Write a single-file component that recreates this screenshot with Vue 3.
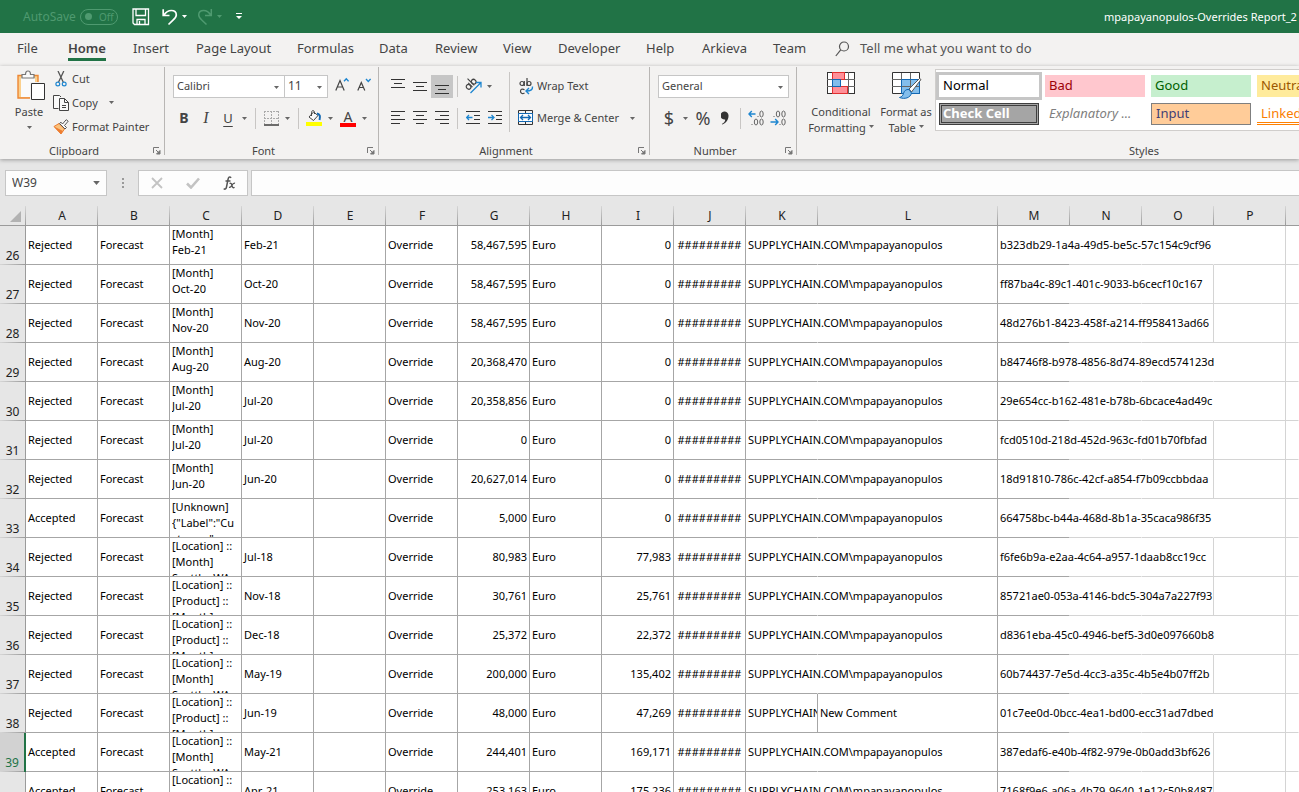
<script setup>
import { h, ref } from 'vue'

const Caret = () => h('svg', { class: 'caret', width: 5, height: 3, viewBox: '0 0 5 3', 'aria-hidden': 'true' }, [h('path', { d: 'M0 0h5L2.5 3z', fill: 'currentColor' })])
const Launcher = () => h('svg', { width: 8, height: 8, viewBox: '0 0 8 8', fill: 'none', stroke: '#777', 'aria-hidden': 'true' }, [h('path', { d: 'M.5 6V.5H6M3 3l3 3' }), h('path', { d: 'M3.5 7H7V3.5z', fill: '#777' })])

const tabs = ['File', 'Home', 'Insert', 'Page Layout', 'Formulas', 'Data', 'Review', 'View', 'Developer', 'Help', 'Arkieva', 'Team']
const active = ref('Home')
const nameBox = ref('W39')
const formula = ref('')

const alignIcons = [
  { name: 'Top Align', d: 'M0 .5h14M3 4.5h8M0 8.5h14', h: 15, row: 1 },
  { name: 'Middle Align', d: 'M0 3.5h14M3 7.5h8M0 11.5h14', h: 15, row: 1 },
  { name: 'Bottom Align', d: 'M0 7.5h14M3 11.5h8M0 15.5h14', h: 16, row: 1, on: true },
  { name: 'Align Left', d: 'M0 .5h14M0 4.5h9M0 8.5h14M0 12.5h9', h: 14, row: 2 },
  { name: 'Center', d: 'M0 .5h14M3 4.5h8M0 8.5h14M3 12.5h8', h: 14, row: 2 },
  { name: 'Align Right', d: 'M0 .5h14M5 4.5h9M0 8.5h14M5 12.5h9', h: 14, row: 2 },
]

const styles = [
  ['Normal', 'normal'], ['Bad', 'bad'], ['Good', 'good'], ['Neutral', 'neutral'],
  ['Check Cell', 'check'], ['Explanatory ...', 'expl'], ['Input', 'inputc'], ['Linked Cell', 'linked'],
]

const columns = 'ABCDEFGHIJKLMNOP'.split('')
const LM = ['[Location] ::', '[Month]', 'Seattle, WA']
const LP = ['[Location] ::', '[Product] ::', '[Month]']
const row = (n, status, scope, period, value, orig, id, extra = {}) => ({ n, status, scope, period, value, orig, id, ...extra })
const rows = [
  row(26, 'Rejected', ['[Month]', 'Feb-21'], 'Feb-21', '58,467,595', '0', 'b323db29-1a4a-49d5-be5c-57c154c9cf96', { wide: true }),
  row(27, 'Rejected', ['[Month]', 'Oct-20'], 'Oct-20', '58,467,595', '0', 'ff87ba4c-89c1-401c-9033-b6cecf10c167'),
  row(28, 'Rejected', ['[Month]', 'Nov-20'], 'Nov-20', '58,467,595', '0', '48d276b1-8423-458f-a214-ff958413ad66'),
  row(29, 'Rejected', ['[Month]', 'Aug-20'], 'Aug-20', '20,368,470', '0', 'b84746f8-b978-4856-8d74-89ecd574123d', { wide: true }),
  row(30, 'Rejected', ['[Month]', 'Jul-20'], 'Jul-20', '20,358,856', '0', '29e654cc-b162-481e-b78b-6bcace4ad49c', { wide: true }),
  row(31, 'Rejected', ['[Month]', 'Jul-20'], 'Jul-20', '0', '0', 'fcd0510d-218d-452d-963c-fd01b70fbfad'),
  row(32, 'Rejected', ['[Month]', 'Jun-20'], 'Jun-20', '20,627,014', '0', '18d91810-786c-42cf-a854-f7b09ccbbdaa'),
  row(33, 'Accepted', ['[Unknown]', '{"Label":"Cu', 'stomer"'], '', '5,000', '0', '664758bc-b44a-468d-8b1a-35caca986f35', { wide: true }),
  row(34, 'Rejected', LM, 'Jul-18', '80,983', '77,983', 'f6fe6b9a-e2aa-4c64-a957-1daab8cc19cc'),
  row(35, 'Rejected', LP, 'Nov-18', '30,761', '25,761', '85721ae0-053a-4146-bdc5-304a7a227f93'),
  row(36, 'Rejected', LP, 'Dec-18', '25,372', '22,372', 'd8361eba-45c0-4946-bef5-3d0e097660b8', { wide: true }),
  row(37, 'Rejected', LM, 'May-19', '200,000', '135,402', '60b74437-7e5d-4cc3-a35c-4b5e4b07ff2b'),
  row(38, 'Rejected', LP, 'Jun-19', '48,000', '47,269', '01c7ee0d-0bcc-4ea1-bd00-ecc31ad7dbed', { wide: true, comment: 'New Comment' }),
  row(39, 'Accepted', LM, 'May-21', '244,401', '169,171', '387edaf6-e40b-4f82-979e-0b0add3bf626', { selected: true }),
  row(40, 'Accepted', LP, 'Apr-21', '253,163', '175,236', '7168f9e6-a06a-4b79-9640-1e12c50b8487'),
]
</script>

<template>
  <div class="excel">
    <header class="titlebar">
      <label class="autosave">AutoSave
        <input type="checkbox" disabled>
        <span class="switch"><i></i>Off</span>
      </label>
      <div class="quick">
        <button aria-label="Save">
          <svg width="18" height="18" viewBox="0 0 18 18" fill="none" stroke="#fff" stroke-width="1.3"><path d="M1 1h15.5v15.5H2.5L1 15zM4 1v6.5h9.5V1M5 16.5v-5h8v5M7.5 16.5V13" /></svg>
        </button>
        <button class="undo" aria-label="Undo">
          <svg width="16" height="18" viewBox="0 0 16 18" fill="none" stroke="#fff" stroke-width="1.7"><path d="M1.2 1.2v6.3h6.3M1.8 7.2C4 4 6.500 2.500 9.300 2.500c3.200 0 5 2 5 4.500 0 2.200-1.500 3.600-3.300 5.200L6.500 16.500" /></svg>
          <Caret />
        </button>
        <button class="redo" aria-label="Redo" disabled>
          <svg width="16" height="18" viewBox="0 0 16 18" fill="none" stroke="currentColor" stroke-width="1.500"><path d="M14.300 1v6.500H8M13.800 7.200C11.800 4 9.500 2.500 6.700 2.500c-3.200 0-5 2-5 4.500 0 2.200 1.500 3.600 3.300 5.200l4.500 4.300" /></svg>
          <Caret />
        </button>
        <button class="custom" aria-label="Customize Quick Access Toolbar">
          <svg width="6" height="7" viewBox="0 0 6 7" fill="#fff"><path d="M0 0h6v1H0zM0 3h6L3 6z" /></svg>
        </button>
      </div>
      <div class="doc-title">mpapayanopulos-Overrides Report_2</div>
    </header>

    <nav class="tabs" aria-label="Ribbon tabs">
      <button v-for="t in tabs" :key="t" :class="{ on: t === active }" @click="active = t">{{ t }}</button>
      <svg class="search" width="15" height="16" viewBox="0 0 15 16" fill="none" stroke="#555" stroke-width="1.200"><circle cx="9" cy="5.500" r="4.500" /><path d="M5.700 8.800L.8 15" /></svg>
      <button class="tell">Tell me what you want to do</button>
    </nav>

    <section class="ribbon" aria-label="Home">
      <div class="group clipboard">
        <div class="body">
          <button class="paste">
            <svg width="30" height="31" viewBox="0 0 30 31" fill="none">
              <path d="M2 5.500h20V28H2z" fill="#fbd08d" stroke="#ed8733" stroke-width="1.400" />
              <path d="M5 8h14v19H5z" fill="#fafafa" />
              <path d="M6 8V4.500h3.500C9.500 2 10.500 1 12 1s2.500 1 2.500 3.500H18V8z" fill="#fafafa" stroke="#777" stroke-width="1.200" />
              <path d="M14 12h16v19H14z" fill="#f3f2f1" />
              <path d="M15.500 13.500h13v16h-13z" fill="#fff" stroke="#333" />
            </svg>
            <span>Paste</span><Caret />
          </button>
          <div class="cliplist">
            <button>
              <svg width="16" height="16" viewBox="0 0 16 16" fill="none"><path d="M5 0l5.300 11.300M10.800 0L5.500 11.300" stroke="#555" stroke-width="1.300" /><circle cx="4.800" cy="13" r="1.900" stroke="#1e86d0" stroke-width="1.200" /><circle cx="11.200" cy="13" r="1.900" stroke="#1e86d0" stroke-width="1.200" /></svg>
              Cut
            </button>
            <button>
              <svg width="16" height="16" viewBox="0 0 16 16" fill="none" stroke="#444"><path d="M5.500 13.500h-5V.5h6l1.500 1.500M6.500 3.500h5l4 4v8h-9z" fill="#fafafa" /><path d="M11.500 3.500v4h4M9 10.500h4M9 12.500h4" /></svg>
              Copy <Caret />
            </button>
            <button>
              <svg width="16" height="16" viewBox="0 0 16 16" fill="none"><path d="M6 4.500L1 7.500l7 7.500 3.500-5z" fill="#fbc27c" stroke="#ed7d31" /><path d="M1 7.500l7 7.500 2-3z" fill="#ed7d31" /><path d="M6.500 4.500l5.500 5.500 1.500-1.500-2-2 3.700-4.300-2-1.500L9.500 5 8 3.200z" fill="#fafafa" stroke="#555" /></svg>
              Format Painter
            </button>
          </div>
        </div>
        <div class="caption">Clipboard<button class="launch" aria-label="Clipboard settings"><Launcher /></button></div>
      </div>

      <div class="group font">
        <div class="body rowsbox">
          <div class="tools">
            <span class="pick fontname"><select aria-label="Font"><option>Calibri</option></select><Caret /></span>
            <span class="pick fontsize"><select aria-label="Font size"><option>11</option></select><Caret /></span>
            <button class="t grow" aria-label="Increase Font Size"><svg width="14" height="15" viewBox="0 0 14 15" fill="none"><path d="M.8 13.500L5 3.500l4.200 10M2.300 10h5.400" stroke="#444" stroke-width="1.200" /><path d="M9 4.300l2.300-2.500 2.300 2.500" stroke="#1e86d0" stroke-width="1.400" /></svg></button>
            <button class="t grow" aria-label="Decrease Font Size"><svg width="14" height="15" viewBox="0 0 14 15" fill="none"><path d="M.8 13.500L4.300 5.500l3.500 8M2 10.500h4.600" stroke="#444" stroke-width="1.200" /><path d="M9 2l2.300 2.500L13.600 2" stroke="#1e86d0" stroke-width="1.400" /></svg></button>
          </div>
          <div class="tools">
            <button class="t bold">B</button>
            <button class="t ital">I</button>
            <button class="t under">U</button>
            <button class="c" aria-label="Underline options"><Caret /></button>
            <i class="sep"></i>
            <button class="t" aria-label="Borders"><svg width="15" height="15" viewBox="0 0 15 15" fill="none" stroke="#aaa" stroke-dasharray="2 1"><path d="M0 .5h15M.5 0v13M14.500 0v13M7.500 0v13M0 7.500h15" /><path d="M0 14h15" stroke="#222" stroke-dasharray="none" stroke-width="1.300" /></svg></button>
            <button class="c" aria-label="Border options"><Caret /></button>
            <i class="sep"></i>
            <button class="t" aria-label="Fill Color"><svg width="16" height="16" viewBox="0 0 16 16" fill="none"><path d="M0 12h16v4H0z" fill="#ff0" /><path d="M7.500 2L3 7l4.500 3.500L12 5.500zM5.500 6V2.500C5.500 0 8.500 0 8.500 2.500V4" fill="#fafafa" stroke="#444" /><path d="M11 3.500c3 .5 3.500 3 2.500 6.500" stroke="#1268b3" stroke-width="2" /></svg></button>
            <button class="c" aria-label="Fill color options"><Caret /></button>
            <button class="t fontcolor" aria-label="Font Color"><span>A</span></button>
            <button class="c" aria-label="Font color options"><Caret /></button>
          </div>
        </div>
        <div class="caption">Font<button class="launch" aria-label="Font settings"><Launcher /></button></div>
      </div>

      <div class="group alignment">
        <div class="body">
          <div class="rowsbox">
            <div v-for="r in [1, 2]" :key="r" class="tools">
              <button v-for="a in alignIcons.filter(i => i.row === r)" :key="a.name" class="t" :class="{ pressed: a.on }" :aria-label="a.name">
                <svg width="14" :height="a.h" :viewBox="`0 0 14 ${a.h}`" stroke="#333" shape-rendering="crispEdges"><path :d="a.d" /></svg>
              </button>
              <i class="sep"></i>
              <template v-if="r === 1">
                <button class="t" aria-label="Orientation">
                  <svg width="18" height="18" viewBox="0 0 18 18" fill="none"><g transform="rotate(-45 6 7)" stroke="#444" stroke-width="1.200"><ellipse cx="3" cy="8" rx="2.200" ry="2.500" /><path d="M5.500 5v6M8 1.500V11" /><ellipse cx="10.200" cy="8" rx="2.200" ry="2.500" /></g><path d="M6.500 16L16.500 6M12 5.500h5v5" stroke="#1e86d0" stroke-width="1.300" /></svg>
                </button>
                <button class="c" aria-label="Orientation options"><Caret /></button>
              </template>
              <template v-else>
                <button class="t" aria-label="Decrease Indent"><svg width="15" height="14" viewBox="0 0 15 14" fill="none" stroke="#333"><path d="M0 .5h14M8 4.500h6M8 8.500h6M0 12.500h14" shape-rendering="crispEdges" /><path d="M6.500 6.500H.8M3 4L.6 6.500 3 9" stroke="#1e86d0" stroke-width="1.300" /></svg></button>
                <button class="t" aria-label="Increase Indent"><svg width="15" height="14" viewBox="0 0 15 14" fill="none" stroke="#333"><path d="M0 .5h14M8 4.500h6M8 8.500h6M0 12.500h14" shape-rendering="crispEdges" /><path d="M0 6.500h5.700M3.500 4L6 6.500 3.500 9" stroke="#1e86d0" stroke-width="1.300" /></svg></button>
              </template>
            </div>
          </div>
          <i class="sep tall"></i>
          <div class="rowsbox wraps">
            <button class="tools">
              <svg width="16" height="17" viewBox="0 0 16 17" fill="none" stroke="#444" stroke-width="1.200"><ellipse cx="4" cy="5.500" rx="2" ry="2" /><path d="M6.300 3v5M9 0v8" /><ellipse cx="11" cy="5.500" rx="2" ry="2" /><path d="M6.500 11.700c-2.500-1.500-4 0-4 1.600s1.500 3.100 4 1.600" /><path d="M14.500 8.500c.3 3-1.500 4.500-6 4.500M11 10l-3 3 3 3" stroke="#1e86d0" stroke-width="1.400" /></svg>
              Wrap Text
            </button>
            <button class="tools">
              <svg width="16" height="16" viewBox="0 0 16 16" fill="none"><path d="M.5.5h14v14H.5zM7.500 0v4M7.500 11v4" stroke="#333" /><path d="M.5 3.500h14v8H.5z" fill="#fff" stroke="#1268b3" /><path d="M2.500 7.500h10M5 5L2.500 7.500 5 10M10 5l2.500 2.500L10 10" stroke="#1268b3" stroke-width="1.300" /></svg>
              Merge &amp; Center <Caret />
            </button>
          </div>
        </div>
        <div class="caption">Alignment<button class="launch" aria-label="Alignment settings"><Launcher /></button></div>
      </div>

      <div class="group number">
        <div class="body rowsbox">
          <div class="tools"><span class="pick numfmt"><select aria-label="Number format"><option>General</option></select><Caret /></span></div>
          <div class="tools">
            <button class="t glyph">$</button>
            <button class="c" aria-label="Accounting options"><Caret /></button>
            <button class="t glyph">%</button>
            <button class="t" aria-label="Comma Style"><svg width="8" height="14" viewBox="0 0 8 14"><path d="M.8 13c2.500-1.200 3.400-2.800 3.400-4.500A4 4 0 1 1 7.500 4.300C7.700 8.500 5.500 12 1.500 13.500z" fill="#333" /></svg></button>
            <i class="sep"></i>
            <button class="t" aria-label="Increase Decimal"><svg width="17" height="16" viewBox="0 0 17 16" fill="none" stroke="#666"><ellipse cx="13.500" cy="4" rx="1.700" ry="3" /><ellipse cx="8" cy="12" rx="1.700" ry="3" /><ellipse cx="13.500" cy="12" rx="1.700" ry="3" /><path d="M9.500 6.500h1M3.500 14.500h1" /><path d="M7.500 4H1M3.800 1L1 4l2.800 3" stroke="#1e86d0" stroke-width="1.400" /></svg></button>
            <button class="t" aria-label="Decrease Decimal"><svg width="17" height="16" viewBox="0 0 17 16" fill="none" stroke="#666"><ellipse cx="8" cy="4" rx="1.700" ry="3" /><ellipse cx="13.500" cy="4" rx="1.700" ry="3" /><ellipse cx="13.500" cy="12" rx="1.700" ry="3" /><path d="M3.500 6.500h1M9.500 14.500h1" /><path d="M.5 12H8M5.200 9L8 12l-2.800 3" stroke="#1e86d0" stroke-width="1.400" /></svg></button>
          </div>
        </div>
        <div class="caption">Number<button class="launch" aria-label="Number settings"><Launcher /></button></div>
      </div>

      <div class="group styles">
        <div class="body">
          <button class="large">
            <svg width="30" height="30" viewBox="0 0 30 30" fill="none" shape-rendering="crispEdges"><path d="M1.500 2.500h27v21h-27z" fill="#fff" stroke="#333" /><path d="M1 9.500h28M1 16.500h28M22.500 2v22M6.500 2v22" stroke="#666" /><path d="M6.500 2.500h12v7h-12zM6.500 16.500h15v7h-15z" fill="#ff9098" stroke="#e03030" /><path d="M6.500 9.500h8v7h-8z" fill="#83beec" stroke="#1268b3" /></svg>
            <span>Conditional</span><span>Formatting <Caret /></span>
          </button>
          <button class="large fat">
            <svg width="32" height="30" viewBox="0 0 32 30" fill="none"><path d="M2.500 2.500h27v21h-27z" fill="#fff" /><path d="M11 9h18.500v14.500H11z" fill="#83beec" /><path d="M2.500 23.500v-21h27v21z" stroke="#333" /><path d="M2 9.500h27M2 16.500h27M11.500 3v20M20.500 3v20" stroke="#666" /><path d="M11.500 23.500v-14h18v14z" stroke="#1268b3" /><path d="M19 19L29.500 8.500l1.500 1L21.500 22z" fill="#fff" stroke="#555" /><path d="M19 19.500c-3-.5-5 1.500-5.500 4S11 27 9.500 27.500c5 2 11 .5 12-4.500z" fill="#83beec" stroke="#1268b3" /></svg>
            <span>Format as</span><span>Table <Caret /></span>
          </button>
          <div class="gallery">
            <button v-for="s in styles" :key="s[0]" :class="s[1]">{{ s[0] }}</button>
          </div>
        </div>
        <div class="caption">Styles</div>
      </div>
    </section>

    <section class="formulabar">
      <div class="namebox"><input v-model="nameBox" aria-label="Name Box"><Caret /></div>
      <svg class="grip" width="2" height="10" viewBox="0 0 2 10" fill="#999"><path d="M0 0h2v2H0zM0 4h2v2H0zM0 8h2v2H0z" /></svg>
      <div class="fx">
        <button aria-label="Cancel"><svg width="12" height="12" viewBox="0 0 12 12" stroke="#c3c3c3" stroke-width="1.800"><path d="M1 1l10 10M11 1L1 11" /></svg></button>
        <button aria-label="Enter"><svg width="14" height="12" viewBox="0 0 14 12" fill="none" stroke="#c3c3c3" stroke-width="2.600"><path d="M1 6.500l4 4L13 1.500" /></svg></button>
        <button class="fxi" aria-label="Insert Function"><svg width="13" height="14" viewBox="0 0 13 14" fill="none" stroke="#555"><path d="M8.200 1.800C6.500.3 5.500 1.200 5 3.500L3.500 11c-.4 2-1.300 2.700-2.800 1.700M2.500 5h5" stroke-width="1.500" /><path d="M6.500 7.500c1.500-.8 2 .2 2.500 2s1 3 2.500 1.700M12 7.300c-1.500-.5-2.500 1-3.200 2.200s-1.300 2.300-2.800 1.700" stroke-width="1.300" /></svg></button>
      </div>
      <input v-model="formula" class="formula" aria-label="Formula">
    </section>

    <main class="sheet">
      <table>
        <colgroup>
          <col class="w-head">
          <col v-for="c in columns" :key="c" :class="c === 'L' ? 'w-wide' : 'w-col'">
          <col>
        </colgroup>
        <thead>
          <tr>
            <th class="corner"><svg width="11" height="11" viewBox="0 0 11 11"><path d="M11 0v11H0z" fill="#b2b2b2" /></svg></th>
            <th v-for="c in columns" :key="c" scope="col">{{ c }}</th>
            <th class="last"></th>
          </tr>
        </thead>
        <tbody>
          <tr v-for="r in rows" :key="r.n" :class="{ selected: r.selected }">
            <th scope="row">{{ r.n }}</th>
            <td>{{ r.status }}</td>
            <td>Forecast</td>
            <td class="multi"><div><p v-for="(l, i) in r.scope" :key="i">{{ l }}</p></div></td>
            <td>{{ r.period }}</td>
            <td></td>
            <td>Override</td>
            <td class="num">{{ r.value }}</td>
            <td>Euro</td>
            <td class="num">{{ r.orig }}</td>
            <td class="hash">#########</td>
            <td :class="r.comment ? 'clip' : 'spill'">SUPPLYCHAIN.COM\mpapayanopulos</td>
            <td>{{ r.comment }}</td>
            <td class="spill">{{ r.id }}</td>
            <td class="light spill"></td>
            <td class="light" :class="{ spill: r.wide }"></td>
            <td class="light"></td>
            <td class="light spill"></td>
          </tr>
        </tbody>
      </table>
    </main>
  </div>
</template>

<style>
html, body { overflow: hidden; }
</style>

<style scoped>
* { box-sizing: border-box; }
.excel { height: 100vh; overflow: hidden; display: flex; flex-direction: column; background: #e6e6e6; color: #444; font: 12px/16px "Noto Sans", "Open Sans", sans-serif; }
button, input, select { font: inherit; color: inherit; background: none; border: 0; padding: 0; margin: 0; border-radius: 0; }
svg { display: block; flex: none; }
.caret { color: #666; }

.titlebar { flex: none; height: 33px; background: #217346; color: #fff; display: flex; align-items: center; overflow: hidden; }
.autosave { display: flex; align-items: center; gap: 4px; padding-left: 23px; width: 132px; color: #4f9a70; }
.autosave input { position: absolute; opacity: 0; }
.switch { width: 38px; height: 16px; border: 1px solid #4f9a70; border-radius: 8px; display: flex; align-items: center; gap: 7px; padding-left: 4px; font-size: 10px; }
.switch i { width: 7px; height: 7px; border-radius: 50%; background: #4f9a70; }
.quick { display: flex; align-items: center; flex: 1; }
.quick button { display: flex; align-items: center; gap: 4px; }
.quick .caret { color: #fff; }
.quick .undo { margin-left: 12px; }
.quick .redo { margin-left: 10px; color: #4f9a70; }
.quick .redo .caret { color: #4f9a70; }
.quick .custom { margin-left: 14px; }
.doc-title { flex: 0 0 195px; overflow: hidden; white-space: nowrap; font-size: 11px; }

.tabs { flex: none; height: 33px; background: #f3f2f1; display: grid; grid-template-columns: 51px 65px 63px 101px 82px 56px 68px 55px 88px 56px 71px 62px 25px auto; padding-left: 17px; font-size: 13px; }
.tabs button { justify-self: start; height: 28px; padding-top: 5px; border-bottom: 3px solid transparent; white-space: nowrap; }
.tabs .on { font-weight: 600; border-color: #217346; }
.tabs .search { margin-top: 8px; }
.tabs .tell { color: #555; }

.ribbon { flex: none; height: 93px; background: #f3f2f1; display: flex; overflow: hidden; box-shadow: 0 1px 4px #999; z-index: 1; font-size: 11px; }
.group { flex: none; display: flex; flex-direction: column; position: relative; }
.group::after { content: ""; position: absolute; right: 0; top: 1px; height: 88px; width: 1px; background: #b8b6b4; }
.body { flex: 1; display: flex; min-height: 0; }
.caption { height: 16px; text-align: center; position: relative; padding-right: 17px; }
.launch { position: absolute; right: 4px; top: 4px; }
.clipboard { width: 165px; }
.font { width: 214px; }
.alignment { width: 271px; }
.number { width: 147px; }
.styles { width: 694px; }
.styles .caption { padding: 0; }

.body .paste { margin-left: 14px; width: 30px; display: flex; flex-direction: column; align-items: center; padding-top: 4px; }
.paste span { margin: 3px 0 6px; }
.paste svg:first-child { margin-left: 4px; }
.cliplist { margin-left: 9px; display: flex; flex-direction: column; }
.cliplist button { height: 24px; display: flex; align-items: center; gap: 3px; white-space: nowrap; padding-top: 1px; }
.cliplist .caret { margin-left: 8px; }

.rowsbox { display: flex; flex-direction: column; gap: 8px; padding: 8px 0 0 8px; }
.tools { height: 24px; display: flex; align-items: center; white-space: nowrap; }
.pick { position: relative; display: block; height: 23px; border: 1px solid #c6c6c6; background: #fff; }
.pick select { appearance: none; width: 100%; height: 100%; padding: 0 3px; display: block; }
.pick .caret { position: absolute; right: 5px; top: 10px; pointer-events: none; }
.fontname { width: 112px; }
.fontsize { width: 43px; border-left: 0; margin-right: 3px; font-size: 12px; }
.numfmt { width: 131px; }
.t { width: 22px; height: 23px; display: flex; align-items: center; justify-content: center; }
.c { width: 12px; height: 23px; display: flex; align-items: center; justify-content: flex-start; padding-left: 3px; }
.tools .c { padding-left: 3px; }
.grow { padding-bottom: 3px; }
.pressed { background: #c6c6c6; }
.sep { width: 1px; height: 21px; background: #c8c6c4; margin: 0 4px; flex: none; }
.tools .bold { font-weight: 700; font-size: 14px; }
.tools .ital { font: italic 16px "Liberation Serif", serif; }
.tools .under { font-size: 13px; text-decoration: underline; text-underline-offset: 3px; }
.fontcolor span { width: 16px; height: 17px; border-bottom: 4px solid #f00; font-size: 14px; line-height: 13px; text-align: center; }
.tools .glyph { font-size: 18px; }
.alignment .rowsbox:first-child { padding-right: 3px; }
.tall { height: 60px; margin: 6px 0 0; }
.wraps button { gap: 3px; }
.wraps .caret { margin-left: 8px; }

.styles .body { padding-left: 8px; }
.large { width: 72px; display: flex; flex-direction: column; align-items: center; padding-top: 4px; white-space: nowrap; }
.large.fat { width: 58px; }
.large svg:first-child { margin-bottom: 4px; }
.large span { display: flex; align-items: center; gap: 3px; }
.gallery { height: 62px; margin-top: 3px; padding: 5px 0 0 3px; flex: 1; background: #fff; border: 1px solid #d0cecc; display: grid; grid-template-columns: repeat(4, 100px); grid-auto-rows: 22px; gap: 6px; font-size: 13px; }
.gallery button { text-align: left; padding: 0 0 2px 4px; white-space: nowrap; overflow: hidden; }
.gallery .normal { color: #000; outline: 3px solid #c6c6c6; }
.gallery .bad { background: #ffc7ce; color: #9c0006; }
.gallery .good { background: #c6efce; color: #006100; }
.gallery .neutral { background: #ffeb9c; color: #9c5700; }
.gallery .check { background: #a5a5a5; color: #fff; font-weight: 700; border: 3px double #3f3f3f; padding-left: 1px; line-height: 14px; }
.gallery .expl { color: #7f7f7f; font-style: italic; }
.gallery .inputc { background: #ffcc99; color: #3f3f76; border: 1px solid #7f7f7f; }
.gallery .linked { color: #fa7d00; border-bottom: 3px double #ff8001; padding-bottom: 0; }

.formulabar { flex: none; height: 47px; padding: 11px 0 10px 5px; display: flex; align-items: center; font-size: 12px; }
.namebox, .fx, .formulabar .formula { height: 26px; background: #fdfdfd; border: 1px solid #c6c6c6; }
.namebox { width: 102px; display: flex; align-items: center; padding: 0 6px; }
.namebox input { flex: 1; min-width: 0; }
.namebox svg { width: 7px; height: 4px; }
.grip { margin: 0 14px 0 15px; }
.fx { width: 110px; display: flex; align-items: center; }
.fx button { flex: 1; display: flex; justify-content: center; align-items: center; }
.formulabar .formula { flex: 1; margin-left: 3px; padding: 0 6px; min-width: 0; border-right: 0; }

.sheet { flex: 1; overflow: hidden; color: #000; font-size: 11px; }
table { table-layout: fixed; width: 100%; border-collapse: separate; border-spacing: 0; background: #fff; }
.w-head { width: 26px; }
.w-col { width: 72px; }
.w-wide { width: 180px; }
th { font-weight: 400; background: #e6e6e6; padding: 0; font-size: 12px; }
thead th { height: 20px; border-bottom: 1px solid #9b9b9b; background: linear-gradient(#d6d6d6, #9b9b9b) right / 1px 100% no-repeat #e6e6e6; color: #222; }
thead .last { background: #e6e6e6; }
.corner svg { margin: 2px 0 0 10px; }
tbody th { height: 39px; vertical-align: bottom; border-right: 1px solid #9b9b9b; background: linear-gradient(90deg, #d6d6d6, #9b9b9b) bottom / 100% 1px no-repeat #e6e6e6; color: #222; padding-bottom: 1px; }
.selected th { background-color: #d2d2d2; color: #217346; border-right: 2px solid #217346; }
td { height: 39px; padding: 0 2px; border-right: 1px solid #a6a6a6; border-bottom: 1px solid #a6a6a6; white-space: nowrap; vertical-align: middle; }
.num { text-align: right; }
.hash { text-align: center; overflow: hidden; }
.clip { overflow: hidden; }
.spill { border-right-color: transparent; }
.light { border-color: #d4d4d4; }
.light.spill { border-right-color: transparent; }
.multi div { height: 38px; overflow: hidden; }
.multi p { margin: 0; height: 16px; line-height: 16px; }
</style>
